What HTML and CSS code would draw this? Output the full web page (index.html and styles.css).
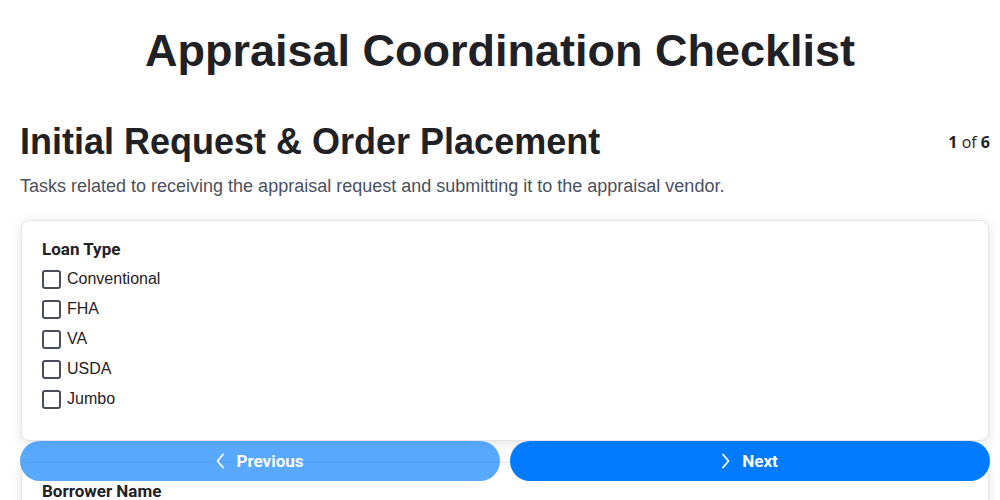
FILE: index.html
```html
<!DOCTYPE html>
<html lang="en">
<head>
<meta charset="utf-8">
<title>Appraisal Coordination Checklist</title>
<link rel="stylesheet" href="styles.css">
</head>
<body>
<main class="page">
  <h1 class="title">Appraisal Coordination Checklist</h1>
  <section class="step">
    <header class="step-head">
      <h2 class="step-title">Initial Request &amp; Order Placement</h2>
      <div class="step-count"><b>1</b> of <b>6</b></div>
    </header>
    <p class="step-desc">Tasks related to receiving the appraisal request and submitting it to the appraisal vendor.</p>

    <div class="card">
      <div class="field-label">Loan Type</div>
      <label class="check"><span class="box"></span>Conventional</label>
      <label class="check"><span class="box"></span>FHA</label>
      <label class="check"><span class="box"></span>VA</label>
      <label class="check"><span class="box"></span>USDA</label>
      <label class="check"><span class="box"></span>Jumbo</label>
    </div>

    <div class="card">
      <div class="field-label">Borrower Name</div>
      <div class="input"></div>
    </div>
  </section>
</main>
<nav class="nav">
  <button class="btn btn-prev" disabled>
    <svg class="chev" viewBox="0 0 8 16" width="8" height="16"><path d="M7 1.5 L1.5 8 L7 14.5" fill="none" stroke="currentColor" stroke-width="1.8" stroke-linecap="round" stroke-linejoin="round"/></svg>
    Previous
  </button>
  <button class="btn btn-next">
    <svg class="chev" viewBox="0 0 8 16" width="8" height="16"><path d="M1 1.5 L6.5 8 L1 14.5" fill="none" stroke="currentColor" stroke-width="1.8" stroke-linecap="round" stroke-linejoin="round"/></svg>
    Next
  </button>
</nav>
</body>
</html>
```
FILE: styles.css
```css
* { box-sizing: border-box; }
html, body { margin: 0; padding: 0; background: #fff; }
body {
  font-family: Roboto, "Liberation Sans", Arial, sans-serif;
  color: #1f2125;
}
.page {
  padding: 0 20px 40px 20px;
}
.title {
  font-family: "Liberation Sans", Arial, sans-serif;
  font-weight: 700;
  font-size: 45px;
  line-height: 50px;
  text-align: center;
  margin: 0;
  padding-top: 26px;
  color: #1f2125;
}
.step { margin: 45px -10px 0 0; }
.step-head {
  display: flex;
  justify-content: space-between;
  align-items: center;
}
.step-title {
  font-family: "Liberation Sans", Arial, sans-serif;
  font-weight: 700;
  font-size: 36px;
  line-height: 42px;
  margin: 0;
  color: #1f2125;
}
.step-count {
  font-family: "Open Sans", "Noto Sans", sans-serif;
  font-size: 16px;
  color: #1f2125;
}
.step-desc {
  font-family: "Liberation Sans", Arial, sans-serif;
  font-size: 18px;
  line-height: 22px;
  color: #4a5060;
  margin: 12px 0 23px;
}
.card {
  background: #fff;
  border: 1px solid #e4e4ea;
  border-radius: 8px;
  box-shadow: 0 3px 14px rgba(0, 0, 0, 0.11);
  padding: 18px 20px 26px;
  margin: 0 1px 21px;
}
.field-label {
  font-weight: 700;
  font-size: 17px;
  line-height: 20px;
  margin-bottom: 5px;
}
.check {
  display: flex;
  align-items: center;
  gap: 6px;
  height: 30px;
  font-family: "Liberation Sans", Arial, sans-serif;
  font-size: 16px;
  color: #1f2125;
}
.box {
  width: 19px;
  height: 19px;
  border: 2px solid #4a4d5c;
  border-radius: 3px;
  flex: none;
}
.input { height: 40px; }
.nav {
  position: fixed;
  left: 20px;
  right: 10px;
  bottom: 19px;
  display: flex;
  gap: 10px;
}
.btn {
  flex: 1;
  height: 40px;
  border: 0;
  border-radius: 20px;
  background: #007bff;
  color: #fff;
  font-family: Roboto, "Liberation Sans", Arial, sans-serif;
  font-weight: 700;
  font-size: 17px;
  display: flex;
  align-items: center;
  justify-content: center;
  gap: 12px;
}
.btn-prev { opacity: 0.65; }
.chev { display: block; }
```
